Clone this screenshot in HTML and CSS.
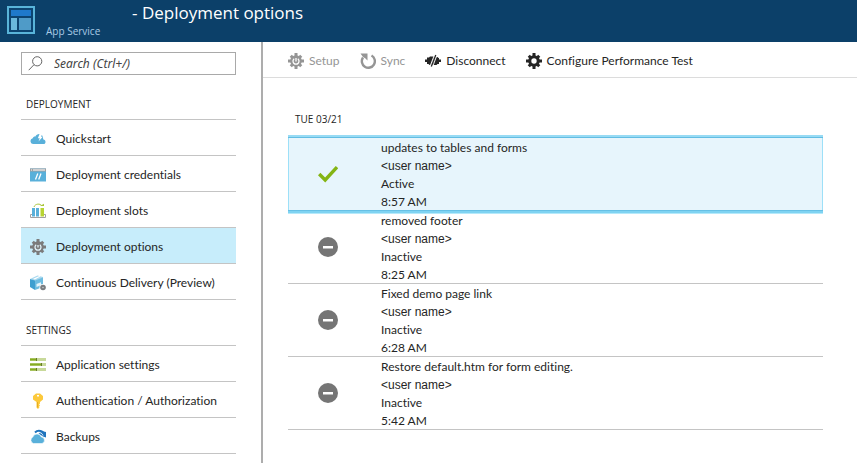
FILE: index.html
```html
<!DOCTYPE html>
<html lang="en">
<head>
<meta charset="utf-8">
<title>Deployment options</title>
<link rel="stylesheet" href="styles.css">
</head>
<body>
<header class="header">
  <svg class="logo" viewBox="0 0 28 28" aria-hidden="true">
    <path fill="#59b4d9" d="M0 0h28v28H0z"/><path fill="#0c4471" d="M2 2h24v24H2z"/>
    <path fill="#1f79cb" d="M4 4h20v6H4z"/><path fill="#6ab8dd" d="M4 12h6v12H4z"/><path fill="#4f9bc8" d="M12 12h12v12H12z"/>
  </svg>
  <p class="service">App Service</p>
  <h1 class="title">- Deployment options</h1>
</header>
<div class="body">
  <aside class="sidebar">
    <label class="search">
      <svg class="glass" viewBox="0 0 15 15" aria-hidden="true"><circle cx="9.2" cy="5.3" r="4.6"/><path d="M6 8.7.7 14.2"/></svg>
      <input class="search-input" type="search" placeholder="Search (Ctrl+/)" aria-label="Search">
    </label>
    <nav>
      <h2 class="group">DEPLOYMENT</h2>
      <ul class="menu">
        <li><a class="item" href="#"><svg class="icon" viewBox="0 0 16 16" aria-hidden="true"><path fill="#59b0da" d="M3 13a2.900 2.900 0 0 1-.3-5.700C3.200 5.500 4.500 5.300 5.400 5.500 6.500 2.500 11 2 12.500 5c.8 1.600.6 2.500.6 3.300C16.500 9 16 13 13.500 13z"/><path fill="#fff" d="M9.700 2.500h2.800L11 5.800h1.800L8.500 10.500l1.200-3.300H7.900z"/></svg>Quickstart</a></li>
        <li><a class="item" href="#"><svg class="icon" viewBox="0 0 16 16" aria-hidden="true"><path fill="#59b0da" d="M0 1.500h16v13H0z"/><path fill="#a0a1a2" d="M0 1.500h16v3H0z"/><path fill="#fff" d="M3 2.500h12v1H3zM1 2.500h1v1H1z"/><path stroke="#fff" stroke-width="1.300" d="M7.800 6.500 5.500 12.500M11 6.500l-2.300 6"/></svg>Deployment credentials</a></li>
        <li><a class="item" href="#"><svg class="icon" viewBox="0 0 16 16" aria-hidden="true"><path fill="none" stroke="#a0a1a2" d="M2 11.500H.5v3h15v-3H14"/><path fill="#59b0da" d="M2 5h3v8.500H2zM6 5h3v8.500H6z"/><path fill="#b8d432" d="M10.500 5H14v8.500h-3.500z"/><path fill="none" stroke="#a9c63a" d="M4 4C5 .5 10.500.2 12 3"/><path fill="#a9c63a" d="M9.800 3H14V.8z"/></svg>Deployment slots</a></li>
        <li><a class="item selected" href="#" aria-current="page"><svg class="icon gear-side" viewBox="0 0 16 16" aria-hidden="true"><use href="#cog"/><path fill="none" stroke="#e2f4fb" stroke-width="1.300" d="M6.200 5.800a3 3 0 1 0 3.600 0M8 6v2.500"/></svg>Deployment options</a></li>
        <li><a class="item" href="#"><svg class="icon" viewBox="0 0 16 16" aria-hidden="true"><path fill="#a9d9ef" d="m0 4 7.500-3.500L13 2v3L5 6z"/><path fill="#3e9fd0" d="m0 4 5 1.500v9.500L0 12z"/><path fill="#6ebce0" d="m5 5.500 8-3V12l-8 3z"/><path fill="#e6f5fb" d="m6.500 9 4.500-1.800v3L6.500 12z"/><path fill="#fff" d="m3.200 3.800 6-2.800 1.300.4-5.700 3z"/><circle cx="13" cy="12.500" r="3.500" fill="#fff"/><circle cx="13" cy="12.500" r="2.800" fill="#7a7d80"/><circle cx="13" cy="12.500" r=".8" fill="#c4c5c6"/></svg>Continuous Delivery (Preview)</a></li>
      </ul>
      <h2 class="group">SETTINGS</h2>
      <ul class="menu">
        <li><a class="item" href="#"><svg class="icon" viewBox="0 0 16 16" aria-hidden="true"><path fill="#c8d99a" d="M0 1h16v3H0zM0 6h16v3H0zM0 11h16v3H0z"/><path fill="#86ac20" d="M0 1.500h6v2H0zM0 6.500h11v2H0zM0 11.500h6v2H0z"/><path fill="#68792b" d="M6 1h1v3H6zM11 6h1v3h-1zM6 11h1v3H6z"/></svg>Application settings</a></li>
        <li><a class="item" href="#"><svg class="icon" viewBox="0 0 16 16" aria-hidden="true"><path fill="#fcc93c" d="M6 .5h4L13 3v3.500L10 9v1.500L9 11.500l1 1-1 1 .5.800L8 16l-1.500-1.500V9L3 6.500V3z"/><path fill="#fff" d="M7 2h2v1.500H7z"/><path fill="#e2a51b" d="M7.200 9h.8v5.500h-.8z"/></svg>Authentication / Authorization</a></li>
        <li><a class="item" href="#"><svg class="icon" viewBox="0 0 16 16" aria-hidden="true"><path fill="none" stroke="#1f74bd" stroke-width="2" d="M5 3.500C8 .5 13 1.500 14.500 6"/><path fill="#1f74bd" d="m8.500 4.500 3-2.500 4.500 1v5.500l-3-1z"/><path stroke="#fff" fill="none" d="M7 4.500C9 3 12 3.500 13 6.500"/><path fill="#59b0da" stroke="#fff" stroke-width=".6" d="M3.500 14.500A3.500 3.500 0 0 1 2.800 8 4.500 4.500 0 0 1 11.300 8a3.300 3.300 0 0 1 .7 6.500z"/></svg>Backups</a></li>
      </ul>
    </nav>
  </aside>
  <main class="main">
    <div class="toolbar">
      <button class="tool" type="button" disabled><svg class="icon" viewBox="0 0 16 16" aria-hidden="true"><use href="#cog"/><path fill="none" stroke="#fff" stroke-width="1.300" d="M6.200 5.800a3 3 0 1 0 3.600 0M8 5v3.500"/></svg>Setup</button>
      <button class="tool" type="button" disabled><svg class="icon" viewBox="0 0 16 16" aria-hidden="true"><path fill="none" stroke="currentColor" stroke-width="2.400" d="M11.500 2.500A6.500 6.500 0 1 1 3 4.500"/><path fill="currentColor" d="M.5.500h7v7l-2.300-2.300L3 4z"/></svg>Sync</button>
      <button class="tool" type="button"><svg class="icon" viewBox="0 0 16 16" aria-hidden="true"><path fill="currentColor" d="M0 6.500h2V4.500h2l1-1h4L5.500 12H4.500l-1-1H2V9H0zM11.500 4h1l1 1H14v1.500h2V9h-2v2h-1.500l-1 1H7.500z"/><path stroke="#fff" stroke-width=".9" d="M9.500 1.500 5 13.500M12.200 1.500 7.700 13.500"/><path stroke="currentColor" stroke-width="1.300" d="M10.800 2 6.300 13.500"/></svg>Disconnect</button>
      <button class="tool" type="button"><svg class="icon" viewBox="0 0 16 16" aria-hidden="true"><use href="#cog"/><circle cx="8" cy="8" r="2.700" fill="#fff"/></svg>Configure Performance Test</button>
    </div>
    <section class="history">
      <h2 class="date">TUE 03/21</h2>
      <ul class="list">
        <li class="entry active"><svg class="status" viewBox="0 0 20 20" aria-hidden="true"><path fill="none" stroke="#84b414" stroke-width="3.400" d="m1.200 10 6 6L19 3.200"/></svg>
          <div class="details"><p>updates to tables and forms</p><p class="user">&lt;user name&gt;</p><p>Active</p><p>8:57 AM</p></div></li>
        <li class="entry"><svg class="status" viewBox="0 0 20 20" aria-hidden="true"><circle cx="10" cy="10" r="10" fill="#757575"/><path fill="#fff" d="M5 9h10v2.500H5z"/></svg>
          <div class="details"><p>removed footer</p><p class="user">&lt;user name&gt;</p><p>Inactive</p><p>8:25 AM</p></div></li>
        <li class="entry"><svg class="status" viewBox="0 0 20 20" aria-hidden="true"><circle cx="10" cy="10" r="10" fill="#757575"/><path fill="#fff" d="M5 9h10v2.500H5z"/></svg>
          <div class="details"><p>Fixed demo page link</p><p class="user">&lt;user name&gt;</p><p>Inactive</p><p>6:28 AM</p></div></li>
        <li class="entry"><svg class="status" viewBox="0 0 20 20" aria-hidden="true"><circle cx="10" cy="10" r="10" fill="#757575"/><path fill="#fff" d="M5 9h10v2.500H5z"/></svg>
          <div class="details"><p>Restore default.htm for form editing.</p><p class="user">&lt;user name&gt;</p><p>Inactive</p><p>5:42 AM</p></div></li>
      </ul>
    </section>
  </main>
</div>
<svg width="0" height="0" class="defs" aria-hidden="true"><defs><g id="cog" fill="currentColor"><circle cx="8" cy="8" r="5.800"/><path d="M6.500 0h3v16h-3zM0 6.500h16v3H0z"/><path d="M6.500.6h3v14.800h-3zM.6 6.500h14.800v3H.6z" transform="rotate(45 8 8)"/></g></defs></svg>
</body>
</html>
```
FILE: styles.css
```css
* { box-sizing: border-box; }
body { margin: 0; height: 100vh; display: flex; flex-direction: column; overflow: hidden; background: #fff; color: #252525; font: 12px/18px Lato, "Open Sans", sans-serif; font-variant-ligatures: none; }
h1, h2, p, ul { margin: 0; padding: 0; font-weight: 400; }
ul { list-style: none; }
.defs { display: block; }
.header { display: flex; flex: none; height: 42px; padding: 0 7px; background: #0c4069; color: #fff; }
.logo { width: 28px; height: 28px; margin: 6px 11px 0 0; }
.service { width: 86px; padding-top: 22px; font-family: "Open Sans", sans-serif; font-size: 10px; font-weight: 500; color: #a9cbe6; }
.title { font-family: "Open Sans", sans-serif; font-size: 17px; line-height: 26px; }
.body { display: flex; flex: 1; min-height: 0; }
.sidebar { flex: none; width: 263px; padding: 10px 25px 0 21px; border-right: 2px solid #adadad; overflow: hidden; }
.search { display: flex; align-items: center; height: 23px; padding: 0 6px; gap: 11px; border: 1px solid #a9a9a9; }
.glass { flex: none; width: 15px; height: 15px; fill: none; stroke: #666; }
.search-input { flex: 1; min-width: 0; padding: 0; border: 0; outline: 0; background: none; font: italic 12px/18px "Noto Sans", sans-serif; }
.search-input::placeholder { color: #444; opacity: 1; }
.group, .date { font-family: "Open Sans", sans-serif; font-size: 10px; font-weight: 500; }
.group { padding: 20px 5px 6px; }
.menu + .group { padding-top: 21px; }
.menu { border-top: 1px solid #c4c4c4; }
.item { display: flex; align-items: center; gap: 10px; height: 36px; padding: 2px 0 0 9px; border-bottom: 1px solid #c4c4c4; color: inherit; text-decoration: none; }
.item.selected { background: #c7edfb; }
.icon { flex: none; width: 16px; height: 16px; }
.gear-side { color: #7b7b7b; }
.main { flex: 1; min-width: 0; }
.toolbar { display: flex; gap: 20px; height: 36px; padding: 2px 0 0 25px; border-bottom: 1px solid #dcdcdc; }
.tool { display: flex; align-items: center; gap: 5px; padding: 0; border: 0; background: none; color: #252525; font: inherit; font-variant-ligatures: none; }
.tool:disabled { color: #959595; }
.history { padding: 32px 34px 0 25px; }
.date { padding: 0 7px 10px; }
.entry { display: flex; align-items: center; gap: 43px; height: 73px; padding-left: 30px; border-bottom: 1px solid #c4c4c4; }
.entry.active { position: relative; border-color: #66c0e5; background: #e7f5fc; box-shadow: inset 1px 0 #9de0f8, inset -1px 0 #9de0f8, 0 -1px #62bde3, 0 -3px #98dbf4, 0 2px #7fd3f2, 0 3px #b5e9fa; }
.status { flex: none; width: 20px; height: 20px; }
.details { padding-top: 2px; }
.user { font-family: "Liberation Sans", sans-serif; }
```
